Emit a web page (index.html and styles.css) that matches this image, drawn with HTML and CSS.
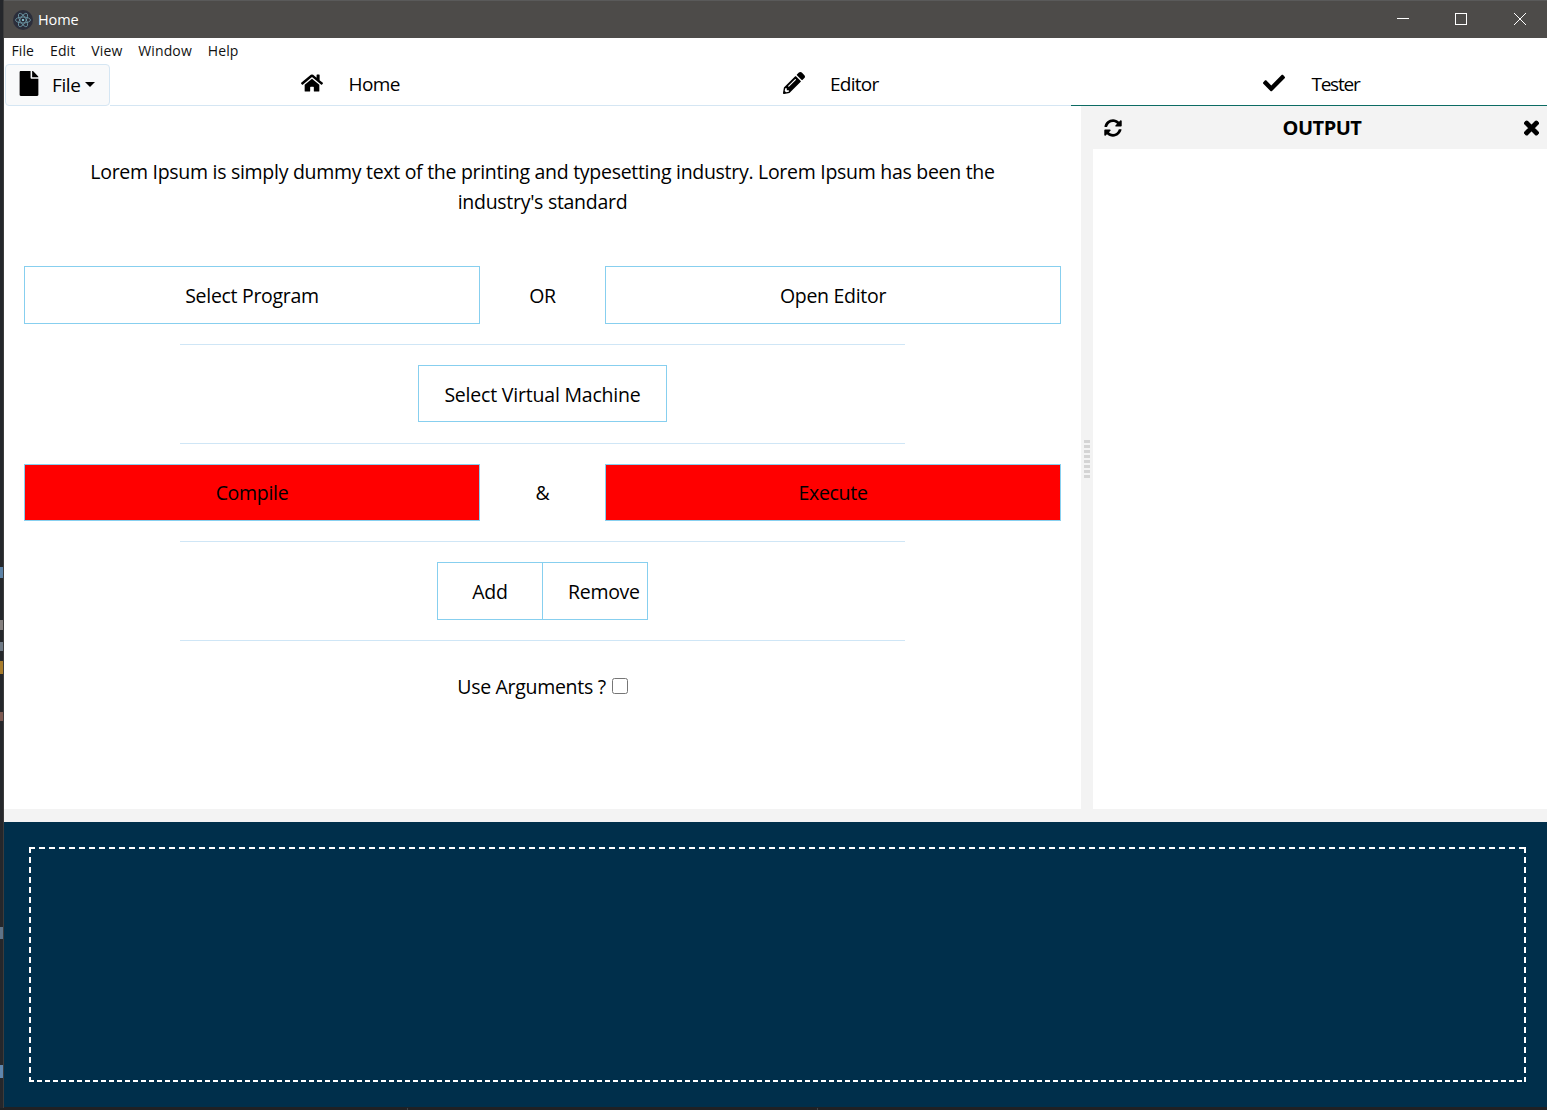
FILE: index.html
```html
<!DOCTYPE html>
<html lang="en">
<head>
<meta charset="utf-8">
<title>Home</title>
<link rel="stylesheet" href="styles.css">
</head>
<body>
<div class="edge">
  <i class="bit b1"></i><i class="bit b2"></i><i class="bit b3"></i><i class="bit b4"></i><i class="bit b5"></i><i class="bit b6"></i><i class="bit b7"></i>
</div>
<div class="window">
  <header class="titlebar">
    <svg class="logo" viewBox="0 0 20 20"><circle cx="10" cy="10" r="10" fill="#2b2e3b"/><g fill="none" stroke="#9feaf9" stroke-width=".8" opacity=".6"><ellipse cx="10" cy="10" rx="7.5" ry="3"/><ellipse cx="10" cy="10" rx="7.5" ry="3" transform="rotate(60 10 10)"/><ellipse cx="10" cy="10" rx="7.5" ry="3" transform="rotate(120 10 10)"/></g><circle cx="10" cy="10" r="1" fill="#9feaf9"/></svg>
    <span class="title">Home</span>
    <div class="winctl">
      <svg class="ctl" viewBox="0 0 58.500 37"><path d="M25 17.500h12" stroke="#fff" fill="none"/></svg>
      <svg class="ctl" viewBox="0 0 58.500 37"><rect x="25.500" y="12.500" width="11" height="11" stroke="#fff" fill="none"/></svg>
      <svg class="ctl" viewBox="0 0 58.500 37"><path d="M25 12l12 12M37 12L25 24" stroke="#fff" fill="none"/></svg>
    </div>
  </header>
  <nav class="menubar">
    <span>File</span><span>Edit</span><span>View</span><span>Window</span><span>Help</span>
  </nav>
  <div class="tabs">
    <button class="filebtn">
      <svg class="ico-file" viewBox="0 0 384 512"><path d="M224 136V0H24C10.700 0 0 10.700 0 24v464c0 13.300 10.700 24 24 24h336c13.300 0 24-10.700 24-24V160H248c-13.200 0-24-10.800-24-24zm160-14.100v6.100H256V0h6.100c6.400 0 12.500 2.500 17 7l97.900 98c4.500 4.500 7 10.600 7 16.900z"/></svg>
      <span>File</span><i class="caret"></i>
    </button>
    <a class="tab">
      <svg class="ico-home" viewBox="0 0 576 512"><path d="M280.370 148.260L96 300.110V464a16 16 0 0 0 16 16l112.060-.29a16 16 0 0 0 15.920-16V368a16 16 0 0 1 16-16h64a16 16 0 0 1 16 16v95.640a16 16 0 0 0 16 16.050L464 480a16 16 0 0 0 16-16V300L295.670 148.260a12.190 12.190 0 0 0-15.300 0zM571.600 251.470L488 182.560V44.050a12 12 0 0 0-12-12h-56a12 12 0 0 0-12 12v72.610L318.470 43a48 48 0 0 0-61 0L4.340 251.470a12 12 0 0 0-1.600 16.900l25.500 31A12 12 0 0 0 45.150 301l235.220-193.740a12.190 12.190 0 0 1 15.300 0L530.900 301a12 12 0 0 0 16.900-1.600l25.500-31a12 12 0 0 0-1.700-16.930z"/></svg>
      <span>Home</span>
    </a>
    <a class="tab">
      <svg class="ico-edit" viewBox="0 0 512 512"><path d="M497.900 142.100l-46.100 46.100c-4.700 4.700-12.300 4.700-17 0l-111-111c-4.700-4.700-4.700-12.300 0-17l46.100-46.100c18.700-18.700 49.100-18.700 67.900 0l60.100 60.100c18.800 18.700 18.800 49.100 0 67.900zM284.200 99.800L21.600 362.400.4 483.900c-2.900 16.400 11.400 30.600 27.800 27.800l121.500-21.300 262.600-262.600c4.700-4.700 4.700-12.300 0-17l-111-111c-4.800-4.700-12.400-4.700-17.100 0zM124.100 339.900c-5.500-5.500-5.500-14.300 0-19.800l154-154c5.500-5.500 14.300-5.500 19.800 0s5.500 14.300 0 19.800l-154 154c-5.500 5.500-14.300 5.500-19.800 0zM88 424h48v36.300l-64.500 11.300-31.100-31.100L51.700 376H88v48z"/></svg>
      <span class="editor-label">Editor</span>
    </a>
    <a class="tab active">
      <svg class="ico-check" viewBox="0 0 512 512"><path d="M173.898 439.404l-166.400-166.400c-9.997-9.997-9.997-26.206 0-36.204l36.203-36.204c9.997-9.998 26.207-9.998 36.204 0L192 312.690 432.095 72.596c9.997-9.997 26.207-9.997 36.204 0l36.203 36.204c9.997 9.997 9.997 26.206 0 36.204l-294.400 294.401c-9.998 9.997-26.207 9.997-36.204-.001z"/></svg>
      <span>Tester</span>
    </a>
  </div>
  <main class="split">
    <section class="home">
      <p class="lead">Lorem Ipsum is simply dummy text of the printing and typesetting industry. Lorem Ipsum has been the industry's standard</p>
      <div class="triple">
        <button class="btn">Select Program</button><span class="mid">OR</span><button class="btn">Open Editor</button>
      </div>
      <hr class="rule">
      <div class="center"><button class="btn vm">Select Virtual Machine</button></div>
      <hr class="rule">
      <div class="triple">
        <button class="btn red">Compile</button><span class="mid">&amp;</span><button class="btn red">Execute</button>
      </div>
      <hr class="rule">
      <div class="center">
        <div class="group"><button class="btn add">Add</button><button class="btn remove">Remove</button></div>
      </div>
      <hr class="rule">
      <label class="args">Use Arguments ? <input class="check" type="checkbox"></label>
    </section>
    <div class="gutter"><i class="grip"></i></div>
    <aside class="output">
      <div class="outhead">
        <svg class="ico-sync" viewBox="0 0 512 512"><path d="M370.720 133.280C339.458 104.008 298.888 87.962 255.848 88c-77.458.068-144.328 53.178-162.791 126.850-1.344 5.363-6.122 9.150-11.651 9.150H24.103c-7.498 0-13.194-6.807-11.807-14.176C33.933 94.924 134.813 8 256 8c66.448 0 126.791 26.136 171.315 68.685L463.030 40.970C478.149 25.851 504 36.559 504 57.941V192c0 13.255-10.745 24-24 24H345.941c-21.382 0-32.090-25.851-16.971-40.971l41.750-41.749zM32 296h134.059c21.382 0 32.090 25.851 16.971 40.971l-41.750 41.750c31.262 29.273 71.835 45.319 114.876 45.280 77.418-.07 144.315-53.144 162.787-126.849 1.344-5.363 6.122-9.150 11.651-9.150h57.304c7.498 0 13.194 6.807 11.807 14.176C478.067 417.076 377.187 504 256 504c-66.448 0-126.791-26.136-171.315-68.685L48.970 471.030C33.851 486.149 8 475.441 8 454.059V320c0-13.255 10.745-24 24-24z"/></svg>
        <strong class="outtitle">OUTPUT</strong>
        <svg class="ico-close" viewBox="0 0 352 512"><path d="M242.720 256l100.070-100.070c12.280-12.280 12.280-32.190 0-44.480l-22.240-22.240c-12.280-12.280-32.190-12.280-44.480 0L176 189.280 75.930 89.210c-12.280-12.280-32.190-12.280-44.480 0L9.210 111.450c-12.280 12.280-12.280 32.190 0 44.480L109.280 256 9.210 356.070c-12.280 12.280-12.280 32.190 0 44.480l22.240 22.240c12.280 12.280 32.200 12.280 44.480 0L176 322.720l100.070 100.070c12.280 12.280 32.200 12.280 44.480 0l22.240-22.240c12.280-12.280 12.280-32.190 0-44.480L242.720 256z"/></svg>
      </div>
      <div class="outbody"></div>
    </aside>
  </main>
  <div class="hgutter"></div>
  <footer class="dock"><div class="drop"></div></footer>
</div>
<i class="tick t1"></i><i class="tick t2"></i>
</body>
</html>
```
FILE: styles.css
```css
* { box-sizing: border-box; }
html, body { margin: 0; height: 1110px; overflow: hidden; }
body {
  display: flex;
  background: #1f2124;
  font-family: "Open Sans", "Noto Sans", sans-serif;
  color: #000;
  position: relative;
}
.edge { width: 4px; flex: none; position: relative; background: #25272b; border-right: 1px solid #3c3c3c; height: 1108px; }
.bit { position: absolute; left: 0; width: 3px; }
.b1 { top: 567px; height: 11px; background: #5c82a6; }
.b2 { top: 620px; height: 10px; background: #85807f; }
.b3 { top: 642px; height: 9px; background: #6f7a86; }
.b4 { top: 661px; height: 13px; background: #a87c2c; }
.b5 { top: 712px; height: 9px; background: #7d5a52; }
.b6 { top: 927px; height: 12px; background: #5f7387; }
.b7 { top: 1065px; height: 13px; background: #5f86ad; }
.window { width: 1543px; height: 1107px; display: flex; flex-direction: column; background: #fff; }
.titlebar { height: 38px; flex: none; display: flex; align-items: center; background: #4d4b49; border-top: 1px solid #5a5a5a; color: #fff; padding-left: 9px; }
.logo { width: 20px; height: 20px; }
.title { font-size: 14.500px; margin-left: 5px; letter-spacing: -.12px; }
.winctl { margin-left: auto; display: flex; }
.ctl { width: 58.500px; height: 37px; display: block; }
.menubar { height: 26px; flex: none; display: flex; gap: 16px; align-items: center; padding: 0 0 2px 7.500px; font-size: 14px; letter-spacing: .1px; color: #111; }
.tabs { height: 42px; flex: none; display: flex; align-items: stretch; }
.filebtn { width: 105px; margin-left: 1px; flex: none; display: flex; align-items: center; padding: 0 0 0 12px; background: #f8f9fa; border: 1px solid #d5e6f3; border-radius: 4px; font: inherit; font-size: 19px; color: #000; letter-spacing: -.4px; }
.filebtn span { margin-left: 12px; }
.ico-file { width: 22px; height: 25px; display: block; margin-top: -3px; }
.caret { margin-left: 5px; margin-top: -2px; border-top: 5.500px solid #000; border-left: 5.500px solid transparent; border-right: 5.500px solid transparent; }
.tab { flex: 1; display: flex; align-items: center; justify-content: center; gap: 26px; font-size: 19px; letter-spacing: -.6px; border-bottom: 1px solid #d5e6f3; }
.tab svg { display: block; flex: none; margin-top: -3px; }
.tab span { margin-top: -1px; }
.tab .editor-label { margin-left: -1px; letter-spacing: -.75px; }
.tab.active { border-bottom-color: #0c6b63; flex: 0 0 476px; padding-left: 5px; letter-spacing: -1.200px; }
.ico-home { width: 22px; height: 20px; }
.ico-edit { width: 22px; height: 22px; }
.ico-check { width: 22px; height: 22px; }
.split { flex: 1; display: flex; min-height: 0; }
.home { width: 1077px; flex: none; padding: 51.450px 20px 0; font-size: 19.500px; letter-spacing: -.3px; }
.lead { margin: 0 0 49px; padding: 0 60px; height: 60px; line-height: 30px; text-align: center; letter-spacing: -.29px; }
.triple { display: grid; grid-template-columns: 456px 125px 456px; align-items: center; text-align: center; }
.center { display: flex; justify-content: center; }
.btn { height: 57.400px; background: #fff; border: 1px solid #87cfef; border-radius: 0; font: inherit; letter-spacing: inherit; color: #000; padding: 0; }
.btn.red { background: #f00; }
.vm { width: 249px; letter-spacing: -.2px; padding-top: 1px; }
.group { display: flex; }
.add { width: 106px; padding-top: 1px; }
.remove { width: 106px; margin-left: -1px; padding: 1px 0 0 25px; text-align: left; white-space: nowrap; }
.rule { width: 725px; height: 1px; border: 0; margin: 20.100px auto; background: #cfe6f6; }
.args { display: flex; justify-content: center; align-items: center; gap: 6px; height: 30px; margin-top: 31px; }
.check { width: 16px; height: 16px; margin: -2px 0 0; }
.gutter { width: 12px; flex: none; background: #f3f3f3; display: flex; align-items: center; justify-content: center; }
.grip { width: 6px; height: 39px; margin-top: 3px; background: linear-gradient(#d4d4d4 0 3px, transparent 3px 5px) 0 0 / 100% 5px, linear-gradient(90deg, transparent 2.500px, #f3f3f3 2.500px 3.500px, transparent 3.500px); }
.output { flex: 1; display: flex; flex-direction: column; min-width: 0; }
.outhead { height: 43px; flex: none; background: #f3f3f3; display: flex; align-items: center; justify-content: space-between; padding: 0 8px 0 11px; }
.outtitle { font-size: 20px; font-weight: 700; letter-spacing: -.5px; margin-right: 2px; }
.ico-sync { width: 18px; height: 18px; }
.ico-close { width: 15px; height: 20px; stroke: #000; stroke-width: 30px; }
.outbody { flex: 1; background: #fff; }
.hgutter { height: 13px; flex: none; background: #f3f3f3; }
.dock { height: 285px; flex: none; background: #002f4b; padding: 25px 21px 25px 25px; }
.drop {
  height: 100%;
  background:
    repeating-linear-gradient(90deg, #fff 0 6px, transparent 6px 10px) 0 0 / 100% 2px no-repeat,
    repeating-linear-gradient(90deg, #fff 0 5px, transparent 5px 8px) 0 100% / 100% 2px no-repeat,
    repeating-linear-gradient(180deg, #fff 0 6px, transparent 6px 10px) 0 0 / 2px 100% no-repeat,
    repeating-linear-gradient(180deg, #fff 0 6px, transparent 6px 10px) 100% 0 / 2px 100% no-repeat;
}
.tick { position: absolute; top: 1108px; width: 1px; height: 2px; background: #444; }
.t1 { left: 407px; }
.t2 { left: 817px; }
```
